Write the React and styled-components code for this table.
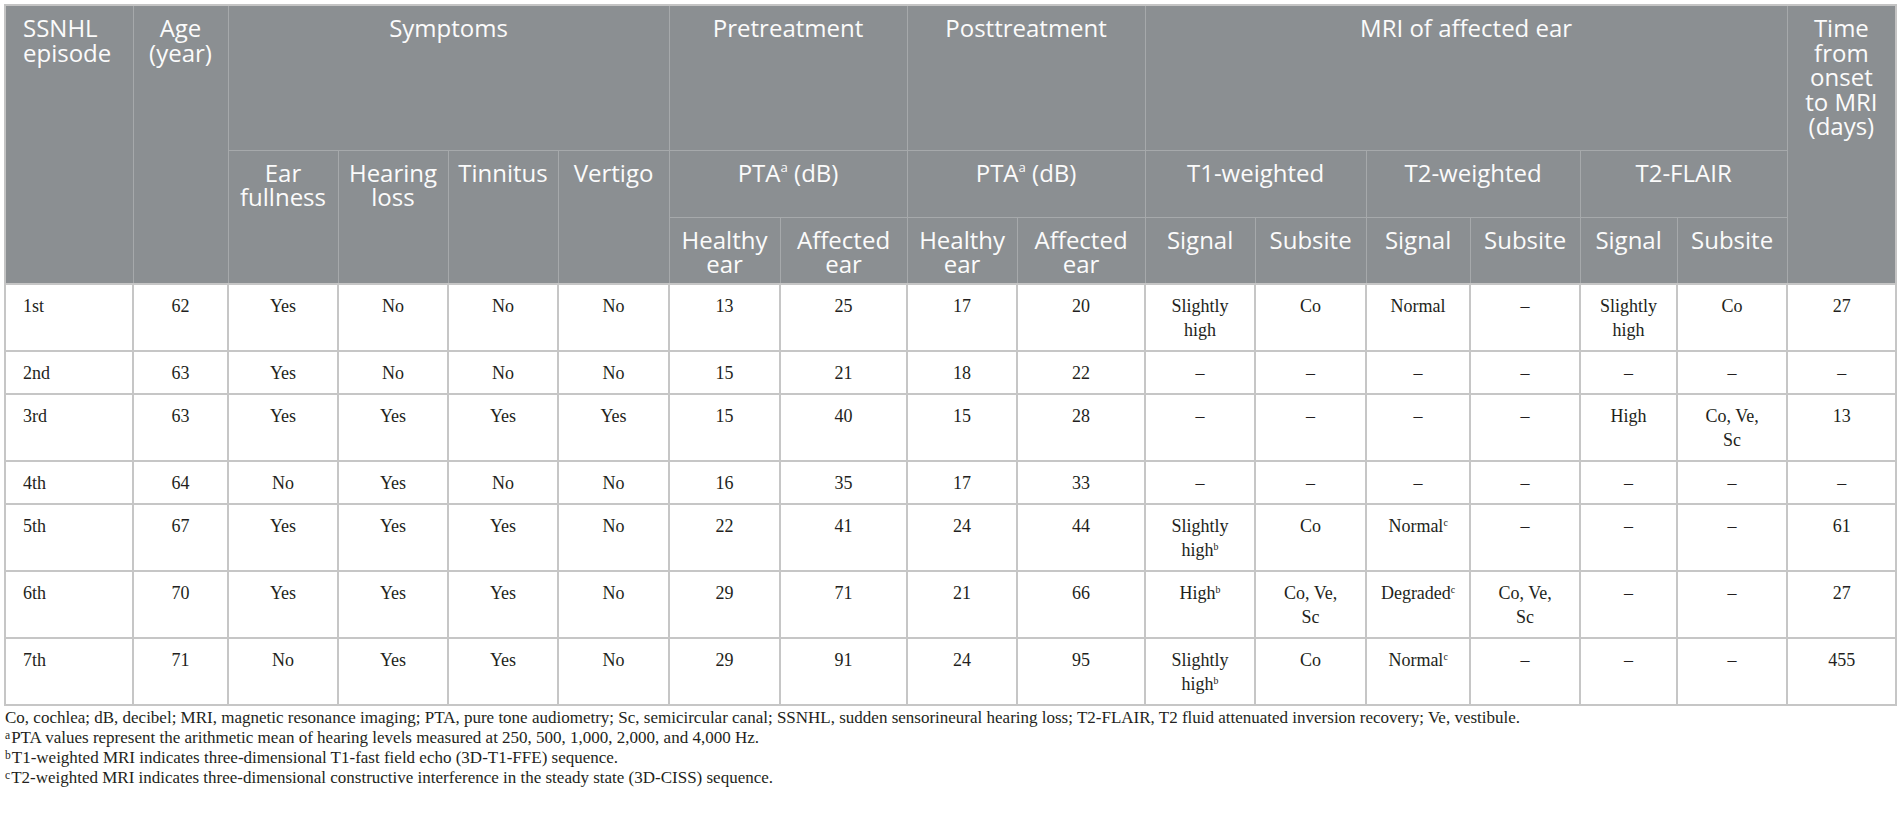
import React from "react";
import styled, { createGlobalStyle } from "styled-components";

const GlobalStyle = createGlobalStyle`
  html, body {
    margin: 0;
    padding: 0;
    background: #ffffff;
  }
  body {
    font-family: "Liberation Serif", "Times New Roman", serif;
  }
`;

const Page = styled.div`
  padding: 4px 5px 0 4px;
`;

const Table = styled.table`
  width: 1892px;
  table-layout: fixed;
  border-collapse: collapse;
  border: 2px solid #c4c4c4;
`;

const HeadRow = styled.tr`
  height: ${(p) => p.$h}px;
`;

const HeadCell = styled.th`
  background: #8b8f92;
  color: #fbfbfb;
  border: 1px solid #a6a9ab;
  font-family: "Open Sans", "Liberation Sans", sans-serif;
  font-weight: 400;
  font-size: 24px;
  line-height: 24.5px;
  text-align: ${(p) => (p.$left ? "left" : "center")};
  vertical-align: top;
  padding: 10px 4px 0 ${(p) => (p.$left ? "17px" : "4px")};
`;

const Cell = styled.td`
  border: 2px solid #c6c6c6;
  color: #231f20;
  font-size: 18px;
  line-height: 24px;
  text-align: ${(p) => (p.$left ? "left" : "center")};
  vertical-align: top;
  padding: 9px 6px 8px ${(p) => (p.$left ? "17px" : "6px")};
`;

const Sup = styled.sup`
  font-size: 0.55em;
  line-height: 0;
  vertical-align: ${(p) => (p.$high ? "0.75em" : "0.6em")};
`;

const Notes = styled.div`
  margin-top: 2px;
  padding-left: 1px;
  color: #231f20;
  font-size: 17px;
  line-height: 20px;
`;

const Note = styled.p`
  margin: 0;
`;

const NoteMark = styled.sup`
  font-size: 0.68em;
  line-height: 0;
  vertical-align: 0.38em;
  margin-right: 1px;
`;

const colWidths = [128, 95, 110, 110, 110, 111, 111, 127, 110, 128, 110, 111, 104, 110, 97, 110, 109];

const D = "–";

const rows = [
  ["1st", "62", "Yes", "No", "No", "No", "13", "25", "17", "20", { l: ["Slightly", "high"] }, "Co", "Normal", D, { l: ["Slightly", "high"] }, "Co", "27"],
  ["2nd", "63", "Yes", "No", "No", "No", "15", "21", "18", "22", D, D, D, D, D, D, D],
  ["3rd", "63", "Yes", "Yes", "Yes", "Yes", "15", "40", "15", "28", D, D, D, D, "High", { l: ["Co, Ve,", "Sc"] }, "13"],
  ["4th", "64", "No", "Yes", "No", "No", "16", "35", "17", "33", D, D, D, D, D, D, D],
  ["5th", "67", "Yes", "Yes", "Yes", "No", "22", "41", "24", "44", { l: ["Slightly", "high"], s: "b" }, "Co", { l: ["Normal"], s: "c" }, D, D, D, "61"],
  ["6th", "70", "Yes", "Yes", "Yes", "No", "29", "71", "21", "66", { l: ["High"], s: "b" }, { l: ["Co, Ve,", "Sc"] }, { l: ["Degraded"], s: "c" }, { l: ["Co, Ve,", "Sc"] }, D, D, "27"],
  ["7th", "71", "No", "Yes", "Yes", "No", "29", "91", "24", "95", { l: ["Slightly", "high"], s: "b" }, "Co", { l: ["Normal"], s: "c" }, D, D, D, "455"],
];

function Lines({ lines }) {
  return lines.map((line, i) => (
    <React.Fragment key={i}>
      {i > 0 && <br />}
      {line}
    </React.Fragment>
  ));
}

function renderValue(v) {
  if (typeof v === "string") return v;
  return (
    <>
      <Lines lines={v.l} />
      {v.s && <Sup>{v.s}</Sup>}
    </>
  );
}

function Pta() {
  return (
    <>
      PTA<Sup $high>a</Sup> (dB)
    </>
  );
}

export default function App() {
  return (
    <Page>
      <GlobalStyle />
      <Table>
        <colgroup>
          {colWidths.map((w, i) => (
            <col key={i} style={{ width: w }} />
          ))}
        </colgroup>
        <thead>
          <HeadRow $h={145}>
            <HeadCell rowSpan={3} $left>
              SSNHL
              <br />
              episode
            </HeadCell>
            <HeadCell rowSpan={3}>
              Age
              <br />
              (year)
            </HeadCell>
            <HeadCell colSpan={4}>Symptoms</HeadCell>
            <HeadCell colSpan={2}>Pretreatment</HeadCell>
            <HeadCell colSpan={2}>Posttreatment</HeadCell>
            <HeadCell colSpan={6}>MRI of affected ear</HeadCell>
            <HeadCell rowSpan={3}>
              <Lines lines={["Time", "from", "onset", "to MRI", "(days)"]} />
            </HeadCell>
          </HeadRow>
          <HeadRow $h={67}>
            <HeadCell rowSpan={2}>
              Ear
              <br />
              fullness
            </HeadCell>
            <HeadCell rowSpan={2}>
              Hearing
              <br />
              loss
            </HeadCell>
            <HeadCell rowSpan={2}>Tinnitus</HeadCell>
            <HeadCell rowSpan={2}>Vertigo</HeadCell>
            <HeadCell colSpan={2}>
              <Pta />
            </HeadCell>
            <HeadCell colSpan={2}>
              <Pta />
            </HeadCell>
            <HeadCell colSpan={2}>T1-weighted</HeadCell>
            <HeadCell colSpan={2}>T2-weighted</HeadCell>
            <HeadCell colSpan={2}>T2-FLAIR</HeadCell>
          </HeadRow>
          <HeadRow $h={67}>
            {["Healthy", "Affected", "Healthy", "Affected"].map((w, i) => (
              <HeadCell key={i}>
                {w}
                <br />
                ear
              </HeadCell>
            ))}
            {["T1", "T2", "FLAIR"].map((k) => (
              <React.Fragment key={k}>
                <HeadCell>Signal</HeadCell>
                <HeadCell>Subsite</HeadCell>
              </React.Fragment>
            ))}
          </HeadRow>
        </thead>
        <tbody>
          {rows.map((row) => (
            <tr key={row[0]}>
              {row.map((v, i) => (
                <Cell key={i} $left={i === 0}>
                  {renderValue(v)}
                </Cell>
              ))}
            </tr>
          ))}
        </tbody>
      </Table>
      <Notes>
        <Note>
          Co, cochlea; dB, decibel; MRI, magnetic resonance imaging; PTA, pure tone audiometry; Sc, semicircular
          canal; SSNHL, sudden sensorineural hearing loss; T2-FLAIR, T2 fluid attenuated inversion recovery; Ve,
          vestibule.
        </Note>
        <Note>
          <NoteMark>a</NoteMark>PTA values represent the arithmetic mean of hearing levels measured at 250, 500,
          1,000, 2,000, and 4,000 Hz.
        </Note>
        <Note>
          <NoteMark>b</NoteMark>T1-weighted MRI indicates three-dimensional T1-fast field echo (3D-T1-FFE) sequence.
        </Note>
        <Note>
          <NoteMark>c</NoteMark>T2-weighted MRI indicates three-dimensional constructive interference in the steady
          state (3D-CISS) sequence.
        </Note>
      </Notes>
    </Page>
  );
}
